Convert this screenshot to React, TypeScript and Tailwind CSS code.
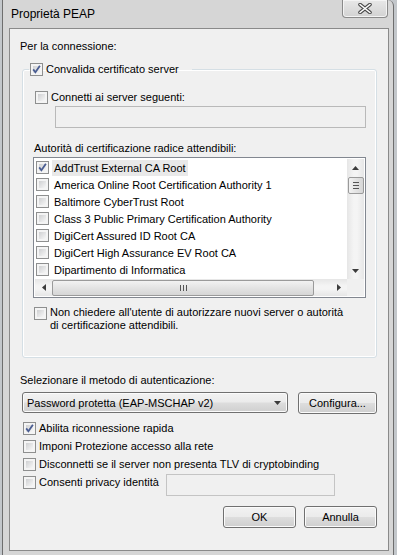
import React from "react";

const Check = ({ on }: { on?: boolean }) => (
  <span className="relative block w-[13px] h-[13px] shrink-0 border border-[#8e8f8f] bg-[#f4f4f4]">
    <span className="absolute inset-[2px] bg-gradient-to-br from-[#cfd0d2] to-[#f7f7f7]" />
    {on && (
      <svg className="absolute inset-0" width="11" height="11" viewBox="0 0 11 11">
        <path d="M2.2 5.4 L4.4 8.2 L8.9 1.8" fill="none" stroke="#4a5d92" strokeWidth="1.8" />
      </svg>
    )}
  </span>
);

const Opt = ({ on, children, className = "" }: { on?: boolean; children: React.ReactNode; className?: string }) => (
  <div className={"flex items-center gap-[3px] " + className}>
    <Check on={on} />
    <span className="whitespace-nowrap">{children}</span>
  </div>
);

const btnBg =
  "border border-[#707070] rounded-[3px] bg-[linear-gradient(#f2f2f2_0%,#ebebeb_48%,#dddddd_52%,#cfcfcf_100%)] shadow-[inset_0_0_0_1px_#fbfbfb]";

const Btn = ({ children, className = "" }: { children: React.ReactNode; className?: string }) => (
  <button className={"h-[22px] flex items-center justify-center " + btnBg + " " + className}>{children}</button>
);

const Arrow = ({ dir }: { dir: "up" | "down" | "left" | "right" }) => {
  const pts = {
    up: "0,4 7,4 3.5,0",
    down: "0,0 7,0 3.5,4",
    left: "4,0 4,7 0,3.5",
    right: "0,0 0,7 4,3.5",
  }[dir];
  const vert = dir === "up" || dir === "down";
  return (
    <svg width={vert ? 7 : 4} height={vert ? 4 : 7} viewBox={vert ? "0 0 7 4" : "0 0 4 7"}>
      <polygon points={pts} fill="#3c3c3c" />
    </svg>
  );
};

const certs = [
  "AddTrust External CA Root",
  "America Online Root Certification Authority 1",
  "Baltimore CyberTrust Root",
  "Class 3 Public Primary Certification Authority",
  "DigiCert Assured ID Root CA",
  "DigiCert High Assurance EV Root CA",
  "Dipartimento di Informatica",
];

export default function App() {
  return (
    <div className="w-[397px] h-[555px] overflow-hidden bg-[#c3c7cb] font-['Liberation_Sans',Arial,sans-serif] text-[11px] leading-[16px] text-black">
      <div className="ml-[2px] w-[392px] h-[555px] bg-[#d6d6d6] border-x border-[#6e6e6e] rounded-tr-[6px] pl-[6px] pr-[4px] flex flex-col">
        {/* title bar */}
        <div className="h-[28px] flex items-start justify-between shrink-0">
          <span className="mt-[6px] ml-[2px] text-[12px]">Proprietà PEAP</span>
          <div className="mr-[1px] w-[46px] h-[18px] flex items-center justify-center rounded-b-[4px] border border-t-0 border-[#8a8a8a] bg-[linear-gradient(#e8e8e8,#d2d2d2)] shadow-[inset_0_0_0_1px_#f4f4f4]">
            <svg width="14" height="11" viewBox="0 0 14 11">
              <path d="M2 1.5 L12 9.5 M12 1.5 L2 9.5" stroke="#4b4b4b" strokeWidth="3.6" strokeLinecap="round" />
              <path d="M2 1.5 L12 9.5 M12 1.5 L2 9.5" stroke="#ffffff" strokeWidth="1.6" strokeLinecap="round" />
            </svg>
          </div>
        </div>

        {/* client panel */}
        <div className="w-[380px] h-[523px] border border-[#8a8a8a] bg-[#f0f0f0] flex flex-col">
          <div className="mt-[9px] pl-[10px]">Per la connessione:</div>

          <fieldset className="mt-[7px] ml-[12px] w-[355px] border border-[#d5dfe5] rounded-[3px] shadow-[inset_0_0_0_1px_#ffffff] pb-[25px] flex flex-col">
            <legend className="ml-[6px] pl-[1px] pr-[13px]">
              <Opt on className="h-[16px]">Convalida certificato server</Opt>
            </legend>

            <Opt className="mt-[12px] ml-[12px] h-[16px]">Connetti ai server seguenti:</Opt>
            <div className="mt-[1px] ml-[32px] w-[311px] h-[22px] border border-[#b9b9b9] bg-[#f0f0f0]" />

            <div className="mt-[12px] ml-[11px]">Autorità di certificazione radice attendibili:</div>

            {/* list box */}
            <div className="mt-[1px] ml-[10px] w-[333px] h-[141px] border border-[#828790] bg-white p-[1px] flex flex-col">
              <div className="flex h-[120px]">
                <div className="flex-1 overflow-hidden">
                  {certs.map((c, i) => (
                    <div key={c} className="h-[17px] flex items-center pl-[1px]">
                      <Check on={i === 0} />
                      <span className={"ml-[3px] px-[2px] h-[16px] whitespace-nowrap " + (i === 0 ? "bg-[#e9e9e9]" : "")}>{c}</span>
                    </div>
                  ))}
                </div>
                {/* vertical scrollbar */}
                <div className="w-[17px] flex flex-col items-center bg-[linear-gradient(90deg,#e6e6e6,#f4f4f4_40%,#f4f4f4_60%,#e6e6e6)]">
                  <div className="h-[17px] flex items-center justify-center">
                    <Arrow dir="up" />
                  </div>
                  <div className="mt-px w-[16px] h-[17px] rounded-[2px] border border-[#9a9a9a] bg-[linear-gradient(90deg,#f2f2f2,#e3e3e3_50%,#d6d6d6)] flex flex-col items-center justify-center gap-[2px]">
                    <span className="w-[6px] h-px bg-[#555]" />
                    <span className="w-[6px] h-px bg-[#555]" />
                    <span className="w-[6px] h-px bg-[#555]" />
                  </div>
                  <div className="flex-1" />
                  <div className="h-[17px] flex items-center justify-center">
                    <Arrow dir="down" />
                  </div>
                </div>
              </div>
              {/* horizontal scrollbar */}
              <div className="flex h-[17px]">
                <div className="flex-1 flex items-center bg-[linear-gradient(#e6e6e6,#f4f4f4_40%,#f4f4f4_60%,#e6e6e6)]">
                  <div className="w-[17px] flex items-center justify-center">
                    <Arrow dir="left" />
                  </div>
                  <div className="w-[262px] h-[16px] rounded-[2px] border border-[#9a9a9a] bg-[linear-gradient(#f2f2f2,#e3e3e3_50%,#d6d6d6)] flex items-center justify-center gap-[2px]">
                    <span className="w-px h-[6px] bg-[#555]" />
                    <span className="w-px h-[6px] bg-[#555]" />
                    <span className="w-px h-[6px] bg-[#555]" />
                  </div>
                  <div className="flex-1" />
                  <div className="w-[17px] flex items-center justify-center">
                    <Arrow dir="right" />
                  </div>
                </div>
                <div className="w-[17px] bg-[#f0f0f0]" />
              </div>
            </div>

            <div className="mt-[8px] ml-[11px] flex items-start gap-[3px] leading-[13px]">
              <span className="mt-px">
                <Check />
              </span>
              <span className="whitespace-nowrap">
                Non chiedere all'utente di autorizzare nuovi server o autorità
                <br />
                di certificazione attendibili.
              </span>
            </div>
          </fieldset>

          <div className="mt-[14px] pl-[10px]">Selezionare il metodo di autenticazione:</div>

          <div className="mt-[4px] ml-[12px] flex items-start">
            <div className={"w-[266px] h-[21px] flex items-center justify-between pl-[4px] pr-[6px] " + btnBg}>
              <span>Password protetta (EAP-MSCHAP v2)</span>
              <Arrow dir="down" />
            </div>
            <Btn className="ml-[10px] w-[79px]">Configura...</Btn>
          </div>

          <div className="mt-[5px] ml-[13px] flex flex-col">
            <Opt on className="h-[18px]">Abilita riconnessione rapida</Opt>
            <Opt className="h-[18px]">Imponi Protezione accesso alla rete</Opt>
            <Opt className="h-[18px]">Disconnetti se il server non presenta TLV di cryptobinding</Opt>
            <div className="flex items-start">
              <Opt className="h-[18px] w-[143px]">Consenti privacy identità</Opt>
              <div className="mt-px w-[169px] h-[22px] border border-[#c4c4c4] bg-[#f0f0f0]" />
            </div>
          </div>

          <div className="mt-[10px] pr-[11px] flex justify-end gap-[8px]">
            <Btn className="w-[73px]">OK</Btn>
            <Btn className="w-[73px]">Annulla</Btn>
          </div>
        </div>
      </div>
    </div>
  );
}
